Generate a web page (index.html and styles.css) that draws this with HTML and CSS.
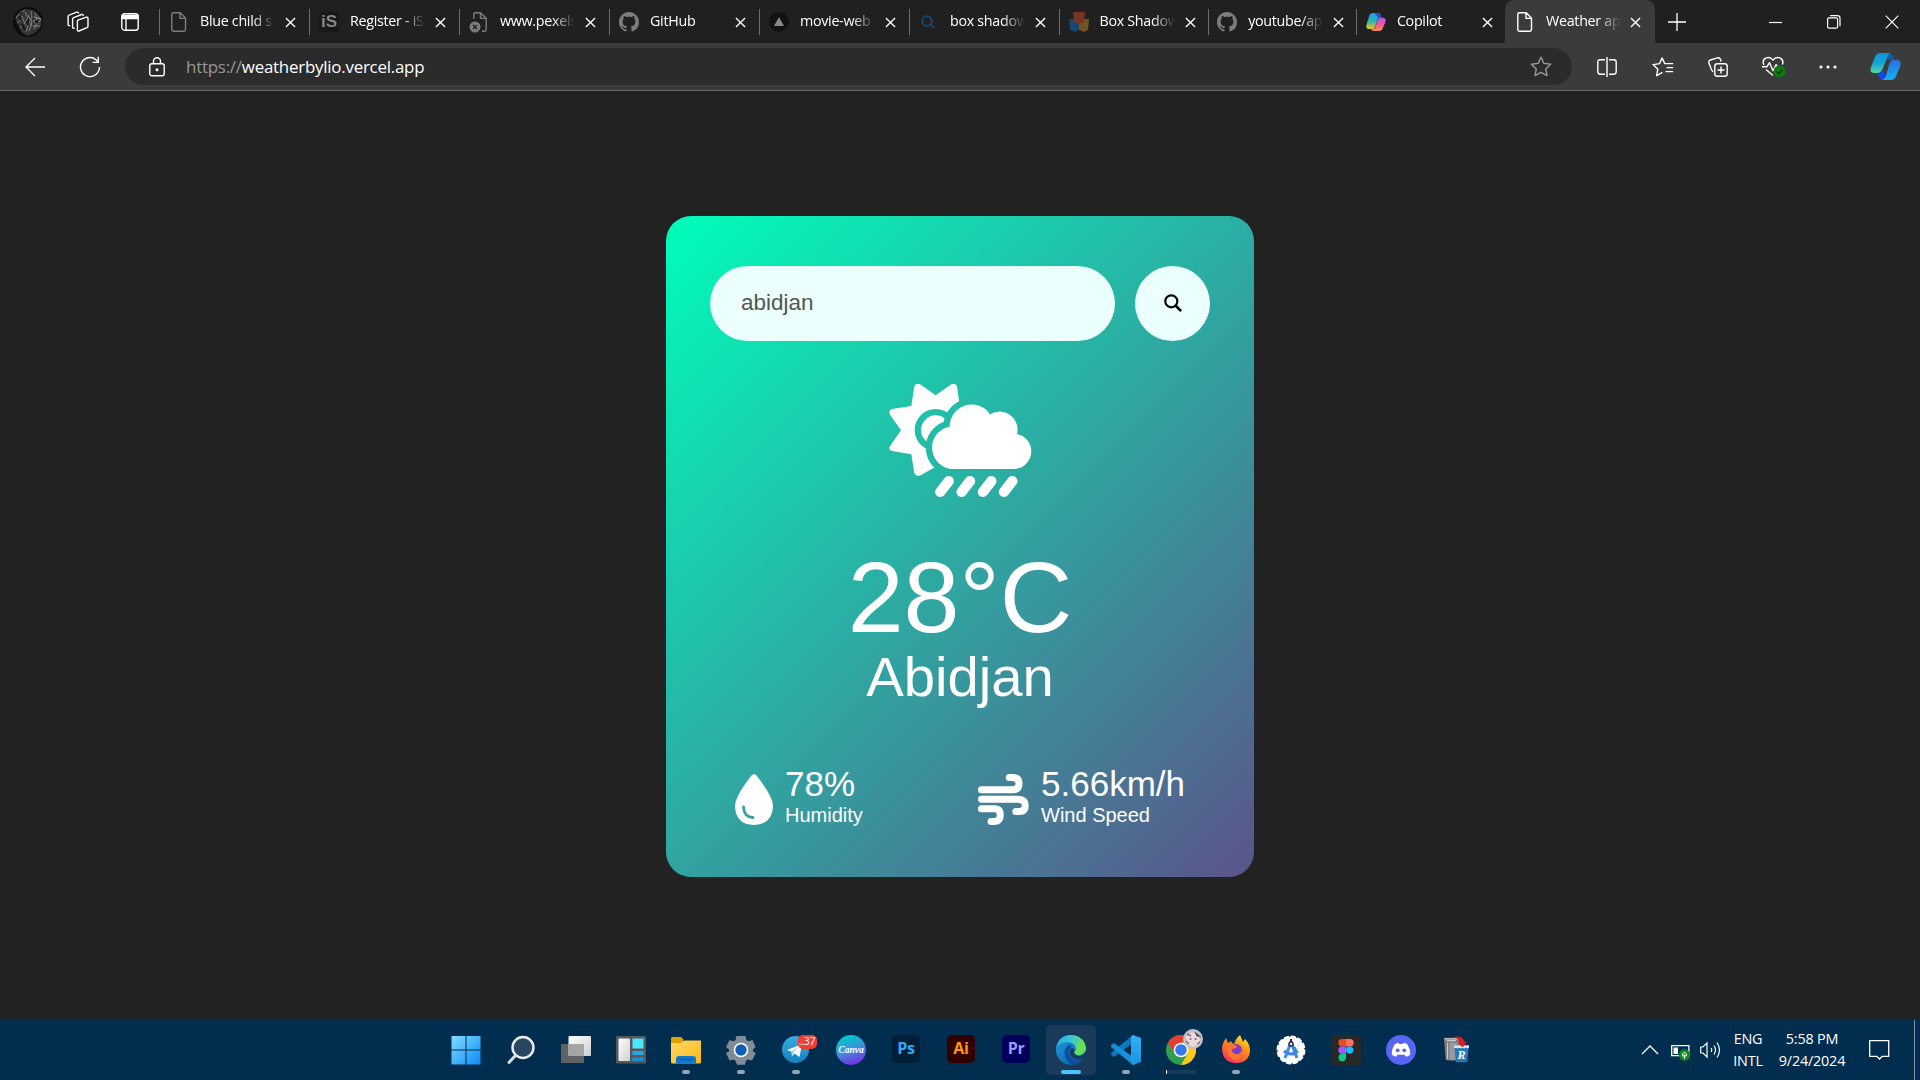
FILE: index.html
```html
<!DOCTYPE html>
<html lang="en">
<head>
<meta charset="utf-8">
<title>Weather app</title>
<link rel="stylesheet" href="styles.css">
</head>
<body>
<svg class="defs" width="0" height="0">
  <defs>
    <linearGradient id="gwin" x1="0" y1="0" x2="1" y2="1"><stop offset="0" stop-color="#82dcff"/><stop offset="1" stop-color="#0a8cf5"/></linearGradient>
    <linearGradient id="gfol" x1="0" y1="0" x2="1" y2="1"><stop offset="0" stop-color="#ffd968"/><stop offset="1" stop-color="#fcb912"/></linearGradient>
    <linearGradient id="gtel" x1="0" y1="0" x2="0" y2="1"><stop offset="0" stop-color="#37aee2"/><stop offset="1" stop-color="#1581c0"/></linearGradient>
    <linearGradient id="gwhite" x1="0" y1="0" x2="1" y2="1"><stop offset="0" stop-color="#fff"/><stop offset="1" stop-color="#cfcfcf"/></linearGradient>
    <linearGradient id="gedge" x1="0" y1="0" x2="1" y2="0"><stop offset="0" stop-color="#2ba9e4"/><stop offset=".5" stop-color="#36c5d8"/><stop offset="1" stop-color="#6be34a"/></linearGradient>
    <linearGradient id="gedge2" x1="0" y1="0" x2="1" y2="1"><stop offset="0" stop-color="#1b9de2"/><stop offset="1" stop-color="#0c59a4"/></linearGradient>
    <linearGradient id="gvs" x1="0" y1="0" x2="0" y2="1"><stop offset="0" stop-color="#33b1f5"/><stop offset="1" stop-color="#1d93e0"/></linearGradient>
    <linearGradient id="gff" x1=".9" y1="0" x2=".3" y2="1"><stop offset="0" stop-color="#fff44f"/><stop offset=".4" stop-color="#ff980e"/><stop offset="1" stop-color="#ff2f5f"/></linearGradient>
    <linearGradient id="gcpa" x1="0" y1="0" x2="0" y2="1"><stop offset="0" stop-color="#1292dc"/><stop offset=".5" stop-color="#12a5d6"/><stop offset="1" stop-color="#56d69a"/></linearGradient>
    <linearGradient id="gcpb" x1="0" y1="0" x2="0" y2="1"><stop offset="0" stop-color="#2a70e0"/><stop offset="1" stop-color="#12b2f2"/></linearGradient>
    <linearGradient id="gcpc" x1="0" y1="0" x2="0" y2="1"><stop offset="0" stop-color="#2199f0"/><stop offset=".5" stop-color="#2cb5a8"/><stop offset="1" stop-color="#f0c81e"/></linearGradient>
    <linearGradient id="gcpd" x1="0" y1="0" x2="0" y2="1"><stop offset="0" stop-color="#a95cf0"/><stop offset=".5" stop-color="#f0559c"/><stop offset="1" stop-color="#ff8a4c"/></linearGradient>
    <symbol id="page" viewBox="0 0 20 22"><path d="M4.500 1.800h6.800l5.200 5.400v11.300q0 1.700-1.700 1.700H4.500q-1.700 0-1.700-1.700V3.500q0-1.700 1.700-1.700zM11 2v5.400h5.400" fill="none" stroke="currentColor" stroke-width="1.400" stroke-linejoin="round"/></symbol>
    <symbol id="x" viewBox="0 0 12 12"><path d="M1 1l10 10M11 1L1 11" fill="none" stroke="currentColor" stroke-width="1.500"/></symbol>
    <symbol id="gh" viewBox="0 0 16 16"><path fill="currentColor" d="M8 0C3.58 0 0 3.58 0 8c0 3.54 2.29 6.53 5.47 7.59.4.07.55-.17.55-.38 0-.19-.01-.82-.01-1.49-2.01.37-2.53-.49-2.69-.94-.09-.23-.48-.94-.82-1.13-.28-.15-.68-.52-.01-.53.63-.01 1.08.58 1.23.82.72 1.21 1.87.87 2.33.66.07-.52.28-.87.51-1.07-1.78-.2-3.64-.89-3.64-3.95 0-.87.31-1.59.82-2.15-.08-.2-.36-1.02.08-2.12 0 0 .67-.21 2.2.82.64-.18 1.32-.27 2-.27s1.36.09 2 .27c1.53-1.04 2.2-.82 2.2-.82.44 1.1.16 1.92.08 2.12.51.56.82 1.27.82 2.15 0 3.07-1.87 3.75-3.65 3.95.29.25.54.73.54 1.48 0 1.07-.01 1.93-.01 2.2 0 .21.15.46.55.38A8.01 8.01 0 0 0 16 8c0-4.42-3.58-8-8-8z"/></symbol>
    <symbol id="cloud" viewBox="0 0 540 420" overflow="visible"><path d="M249 297A64 64 0 0 1 239 170A66 66 0 0 1 360 133A54 54 0 0 1 441 192A53 53 0 0 1 432 297Z"/></symbol>
  </defs>
</svg>
<div class="screen">
  <header class="tabbar">
    <div class="tools">
      <svg class="avatar" width="30" height="30" viewBox="0 0 30 30"><circle cx="15" cy="15" r="15" fill="#0c0c0c"/><path d="M2 12Q5 3 13 2q9 0 13 6l3 5-1 7-6 6-7 3-6-3z" fill="#353535"/><path d="M12 5l3 6-4 5 4 3-2 6M18 4l1 7-3 4 3 4M22 6l2 6-4 2 4 3-3 5M9 9l2 6M25 10l3 2-3 5M3 11l3-4M4 16l4-3M7 21l3-3M9 5l3-2" stroke="#7c7c7c" stroke-width="1" fill="none"/><path d="M15 8l4 7-3 9M21 10l6 2M20 19l7 0" stroke="#aaa" stroke-width=".7" fill="none"/><path d="M9 17l3 6M16 12l-2 6M22 14l3 2M6 9l2 4" stroke="#111" stroke-width="1.600"/></svg>
      <svg width="22" height="22" viewBox="0 0 22 22" fill="none" stroke="#fff" stroke-width="1.400" stroke-linejoin="round" stroke-linecap="round"><path d="M11 9.200l8.400-3q1.600-.3 1.600 1.200v7.800q0 1-1 1.500l-8 3.300q-1.600.5-1.600-1.100v-8.200q0-1.200.6-1.500z"/><path d="M7.200 17.300q-1.600.3-1.600-1.200V8.200q0-1.200 1-1.500l8-3.200q1.400-.4 1.800.9"/><path d="M2.700 14.600q-1.600.3-1.600-1.200V5.700q0-1.200 1-1.500l7.600-3q1.300-.4 1.800.8"/></svg>
      <svg width="18" height="18" viewBox="0 0 18 18" fill="none" stroke="#fff" stroke-width="1.400"><rect x=".8" y=".8" width="16.400" height="16.400" rx="2.800"/><path d="M1 2.500h16v3H1z" fill="#fff"/><path d="M5 5v12"/></svg>
    </div>
    <div class="tab"><svg class="fav dim" width="20" height="22"><use href="#page"/></svg><span class="title">Blue child s</span><svg class="close"><use href="#x"/></svg></div>
    <div class="tab"><div class="fav is">iS</div><span class="title">Register - iS</span><svg class="close"><use href="#x"/></svg></div>
    <div class="tab"><svg class="fav dim" width="20" height="22" viewBox="0 0 20 22"><path d="M4.800 8V3.500q0-1.700 1.700-1.700h5l5.700 5.400v11.300q0 1.700-1.700 1.700H13M11.500 2v5.400H17" fill="none" stroke="currentColor" stroke-width="1.400"/><circle cx="6" cy="16" r="5.500" fill="currentColor"/><path d="M4 14l4 4M8 14l-4 4" stroke="#222" stroke-width="1.400"/></svg><span class="title">www.pexels</span><svg class="close"><use href="#x"/></svg></div>
    <div class="tab"><svg class="fav dim" width="20" height="20"><use href="#gh"/></svg><span class="title">GitHub</span><svg class="close"><use href="#x"/></svg></div>
    <div class="tab"><svg class="fav" width="20" height="20" viewBox="0 0 20 20"><circle cx="10" cy="10" r="10" fill="#111"/><path d="M10 5l5 9H5z" fill="#888"/></svg><span class="title">movie-web</span><svg class="close"><use href="#x"/></svg></div>
    <div class="tab"><svg class="fav" width="20" height="20" viewBox="0 0 20 20" fill="none" stroke="#174a75" stroke-width="1.800"><circle cx="8" cy="9" r="4.800"/><path d="M11.500 12.500l3.500 3.700"/></svg><span class="title">box shadow</span><svg class="close"><use href="#x"/></svg></div>
    <div class="tab narrow"><svg class="fav" width="20" height="20" viewBox="0 0 20 20"><path d="M0 7h10v11l-4 2-5-2z" fill="#17466e"/><path d="M10 7h10l-1 11-4 2-5-2z" fill="#735420"/><path d="M4 0h12l-1 10-5 2-5-2z" fill="#783422"/></svg><span class="title">Box Shadow</span><svg class="close"><use href="#x"/></svg></div>
    <div class="tab narrow"><svg class="fav dim" width="20" height="20"><use href="#gh"/></svg><span class="title">youtube/ap</span><svg class="close"><use href="#x"/></svg></div>
    <div class="tab narrow"><svg class="fav" width="20" height="18" viewBox="0 0 31 27" preserveAspectRatio="none"><path d="M11 0h8q3 0 4 4l1 3h-5l-5 14q-1 3-4 3H5q-6 0-4-7L5 4q1-4 6-4z" fill="url(#gcpc)"/><path d="M20 27h-8q-3 0-4-3l6-1 4-12q1-4 4-4h4q6 0 4 7l-4 9q-1 4-6 4z" fill="url(#gcpd)"/><path d="M13 0h6q3 0 4 4l1 3h-5z" fill="#2454c8"/></svg><span class="title">Copilot</span><svg class="close"><use href="#x"/></svg></div>
    <div class="tab active"><svg class="fav" width="20" height="22"><use href="#page"/></svg><span class="title">Weather ap</span><svg class="close"><use href="#x"/></svg></div>
    <svg class="plus" width="18" height="18" viewBox="0 0 18 18"><path d="M9 0v18M0 9h18" stroke="#fff" stroke-width="1.300"/></svg>
    <div class="winctl">
      <svg width="14" height="14" viewBox="0 0 14 14"><path d="M0 7.500h13" stroke="#fff" stroke-width="1.200"/></svg>
      <svg width="14" height="14" viewBox="0 0 14 14" fill="none" stroke="#fff" stroke-width="1.200"><rect x=".6" y="2.800" width="10" height="10.400" rx="1.500"/><path d="M3 .7h7.500q2.500 0 2.500 2.500v8"/></svg>
      <svg width="14" height="14" viewBox="0 0 14 14"><path d="M.7.700l12.600 12.600M13.300.700L.7 13.300" stroke="#fff" stroke-width="1.200"/></svg>
    </div>
  </header>
  <div class="toolbar">
    <div class="nav">
      <svg width="20" height="20" viewBox="0 0 20 20" fill="none" stroke="#fff" stroke-width="1.400"><path d="M20 10H1M10 1L1 10l9 9"/></svg>
      <svg width="22" height="22" viewBox="0 0 22 22" fill="none" stroke="#fff" stroke-width="1.400"><path d="M20.500 11a9.500 9.500 0 1 1-3.500-7.300l2 2M19.300.8v5.600h-5.600"/></svg>
    </div>
    <div class="address">
      <svg class="lock" width="16" height="20" viewBox="0 0 16 20" fill="none" stroke="#fff" stroke-width="1.400"><rect x=".8" y="6.800" width="14.400" height="12" rx="2"/><path d="M4.500 6.500V4.200a3.500 3.500 0 0 1 7 0v2.300"/><circle cx="8" cy="12.800" r=".8" fill="#fff"/></svg>
      <span class="url"><span class="scheme">https://</span>weatherbylio.vercel.app</span>
      <svg class="star" width="22" height="21" viewBox="0 0 22 21"><path d="M11 1.300l2.900 6.100 6.800.9-5 4.600 1.300 6.700-6-3.300-6 3.300 1.300-6.700-5-4.600 6.800-.9z" fill="none" stroke="#999" stroke-width="1.400" stroke-linejoin="round"/></svg>
    </div>
    <div class="actions">
      <div class="act"><svg width="20" height="20" viewBox="0 0 20 20" fill="none" stroke="#fff" stroke-width="1.400"><path d="M8 2.700H3.200Q.8 2.700.8 5v9.800q0 2.400 2.400 2.400H8M12 2.700h4.800q2.400 0 2.400 2.300v9.800q0 2.400-2.400 2.400H12M10 0v20"/></svg></div>
      <div class="act"><svg class="favs" width="22" height="20" viewBox="0 0 22 20" fill="none" stroke="#fff" stroke-width="1.400" stroke-linejoin="round"><path d="M10.500 15.300l-5.800 3.400 1.100-6.500L1.100 7.600l6.500-1L10 .9l2.800 5.700h8.400M14.500 10.600h6.700M13.500 14.600h7.700"/></svg></div>
      <div class="act"><svg width="20" height="20" viewBox="0 0 20 20" fill="none" stroke="#fff" stroke-width="1.400"><rect x="6.800" y="6.800" width="12.400" height="12.400" rx="2.500"/><path d="M13 9.500v7M9.500 13h7M5 15l-1.800-3L.9 6Q.3 3.800 2.300 3L9.500.8q2-.5 2.900 1.400l.8 2.300"/></svg></div>
      <div class="act"><svg class="health" width="24" height="22" viewBox="0 0 24 22" fill="none" stroke="#fff" stroke-width="1.400" stroke-linejoin="round"><path d="M1.800 9Q-.2 3.500 4.200 1.800 8.500.5 11 4.200 13.500.5 17.800 1.800 22 3.500 20.500 8.500M0 10.700h5l2.500-4 3.500 8 3-6 2 2.500h3M4 13.500l7 6"/><circle cx="17.500" cy="15.500" r="6" fill="#0f7b14" stroke="none"/><path d="M14.500 15.500l2.200 2.200 4-4" stroke="#063d08"/></svg></div>
      <div class="act"><svg class="dots" width="18" height="4" viewBox="0 0 18 4" fill="#fff"><circle cx="2" cy="2" r="1.600"/><circle cx="9" cy="2" r="1.600"/><circle cx="16" cy="2" r="1.600"/></svg></div>
      <div class="act"><svg class="copilot" width="31" height="27" viewBox="0 0 31 27"><path d="M11 0h8q3 0 4 4l1 3-8-1z" fill="#0b5fae"/><path d="M7 18l8 0q-1 9 3 9h-4q-6 0-7-9z" fill="#1b45d8"/><path d="M11 0h9q-2 1-3 5l-4 10q-2 5-6 5H4q-5 0-3-6L5 4q1-4 6-4z" fill="url(#gcpa)"/><path d="M20 27h-8q3-1 4-4l3-11q1-5 5-5h3q5 0 3 7l-4 9q-1 4-6 4z" fill="url(#gcpb)"/></svg></div>
    </div>
  </div>

  <main class="viewport">
    <section class="card">
      <div class="search">
        <div class="field">abidjan</div>
        <button class="go"><svg width="20" height="20" viewBox="0 0 20 20" fill="none" stroke="#000"><circle cx="8.300" cy="8.300" r="6" stroke-width="2.200"/><path d="M12.500 12.500l5.600 5.600" stroke-width="2.600"/></svg></button>
      </div>
      <svg class="weather-icon" width="180" height="140" viewBox="0 0 540 420">
        <mask id="cut" maskUnits="userSpaceOnUse" x="0" y="0" width="540" height="420">
          <rect width="540" height="420" fill="#fff"/>
          <circle cx="197" cy="180" r="53.500" fill="none" stroke="#000" stroke-width="19"/>
          <use href="#cloud" width="540" height="420" stroke="#000" stroke-width="38"/>
        </mask>
        <path mask="url(#cut)" fill="#fff" d="M133 49Q137 38 150 43L197 76 244 43Q257 38 261 49L268 100 300 180 250 260 152 316Q138 322 133 310L124 253 66 243Q54 239 60 228L93 181 60 134Q54 122 66 117L124 108Z"/>
        <use href="#cloud" width="540" height="420" fill="#fff"/>
        <path stroke="#fff" stroke-width="31" stroke-linecap="round" d="M211 365.500l25-32M275 365.500l25-32M339 365.500l25-32M402 365.500l25-32"/>
      </svg>
      <h1 class="temp">28°C</h1>
      <h2 class="city">Abidjan</h2>
      <div class="details">
        <div class="col">
          <svg width="38" height="51" viewBox="0 0 38 51"><path d="M16.500 1.500Q19-1.200 21.500 1.500 38 22.500 38 32 37.500 50.500 19 51 .500 50.500 0 32 0 22.500 16.500 1.500z" fill="#fff"/><path d="M8.500 33q.5 10 9.500 10.500" fill="none" stroke="#31a09f" stroke-width="2.800" stroke-linecap="round"/></svg>
          <div><p class="value">78%</p><p class="label">Humidity</p></div>
        </div>
        <div class="col">
          <svg width="51" height="51" viewBox="0 0 51 51" fill="none" stroke="#fff" stroke-width="7" stroke-linecap="round"><path d="M3.500 15.700H35Q41 15.500 41 9.500 41 3.500 34.500 3.500H31.300M3.500 25.300H40Q47.300 25.500 47.300 31.500 47.300 37.500 41 37.500H37.800M3.500 34.800H17Q22.300 35 22.300 41 22.300 47.400 16.500 47.500H13"/></svg>
          <div><p class="value">5.66km/h</p><p class="label">Wind Speed</p></div>
        </div>
      </div>
    </section>
  </main>

  <footer class="taskbar">
    <div class="apps">
      <div class="app"><svg viewBox="0 0 30 30"><path d="M.5 1h14v13.500H.5zM15.500 1h14v13.500h-14zM.5 15.500h14v14H.5zM15.500 15.500h14v14h-14z" fill="url(#gwin)"/></svg></div>
      <div class="app"><svg viewBox="0 0 30 30"><circle cx="17" cy="12.500" r="10.500" fill="#284762" stroke="#ececec" stroke-width="2.400"/><path d="M9.500 20.500L3 27.500" stroke="#ddd" stroke-width="3" stroke-linecap="round"/></svg></div>
      <div class="app"><svg viewBox="0 0 30 30"><rect y="9" width="23" height="19" rx="1" fill="#5f6265"/><rect x="7.500" y="1" width="22.500" height="20" rx="1" fill="url(#gwhite)"/><path d="M7.500 9H23v12H7.500z" fill="#a5a5a5"/></svg></div>
      <div class="app"><svg viewBox="0 0 30 30"><rect y="1" width="30" height="27.500" rx="1" fill="#55595c"/><rect x="2.500" y="3.500" width="11.500" height="22.500" rx="1" fill="url(#gwhite)"/><path d="M16.500 3.500h11v10h-11z" fill="#4be5ff"/><path d="M16.500 16h11v4h-11z" fill="#25aae8"/><path d="M16.500 22.500h11V26h-11z" fill="#1590dc"/></svg></div>
      <div class="app running"><svg viewBox="0 0 30 30"><path d="M0 3.500Q0 2 1.500 2H10l3 3h-1v6H0z" fill="#e0a000"/><path d="M0 8h10l3-2.500h17V27q0 1.500-1.500 1.500h-27Q0 28.500 0 27z" fill="url(#gfol)"/><path d="M5 28.500V24q0-3 3-3h14q3 0 3 3v4.500z" fill="#1178cc"/><path d="M8.500 24.500h13" stroke="#0b4f9c"/></svg></div>
      <div class="app running"><svg viewBox="0 0 30 30"><path d="M10.500 1h9l1 4 2 1.200 4-1.200 3 7-2.500 2.500v2L30 18l-4 7.500-4-1-2 1.200-1 4h-8l-1.500-4-2-1.200-4 1L0 18l3-1.500v-2L0 12l3.500-7 4 1.200 2-1.200z" fill="#808b95"/><circle cx="15" cy="15" r="6.500" fill="#0f5fb8" stroke="#fff" stroke-width="1.600"/></svg></div>
      <div class="app running"><svg viewBox="0 0 30 30"><circle cx="14.500" cy="14.500" r="13.500" fill="url(#gtel)"/><path d="M6 15l15-6-2.500 13-5-3.500-2.500 2.500-.5-4.500z" fill="#fff"/><path d="M10.500 16.500l7-5-5 6-1.500 3.500z" fill="#a9cde6"/></svg><span class="badge">..37</span></div>
      <div class="app"><div class="tile canva">Canva</div></div>
      <div class="app"><div class="tile adobe ps">Ps</div></div>
      <div class="app"><div class="tile adobe ai">Ai</div></div>
      <div class="app"><div class="tile adobe pr">Pr</div></div>
      <div class="app current"><svg viewBox="0 0 30 30"><circle cx="15" cy="15" r="15" fill="url(#gedge2)"/><path d="M0 14Q3 7 12 7q8 1 8 8-3 2-1 4 5 4 10-3 1-5-1.500-9Q24 0 15 0 2 0 0 14z" fill="url(#gedge)"/><path d="M13 10q-5 3-4.500 9 1 8 8 11 7 0 11-6.500-7 3-12-1-5-4-1-9 2-4-1.500-3.500z" fill="#0d4f9b"/><path d="M15 14q-3 4 1 8 5 4 11 1.500l3-2v-5q-6 7-11 3-2-1-.5-4.500-1.500-3-3.500-1z" fill="#123b5d"/><path d="M20 12q1 3-1 5 0 3 5 3 5-1 6-6 0-5-4-10z" fill="#64df58"/></svg></div>
      <div class="app running"><svg viewBox="0 0 30 30"><path d="M22 0v8L3 22 0 19.500V18z" fill="#0e78bc"/><path d="M22 30v-8L3 8 0 10.500V12z" fill="#168fd8"/><path d="M22 0l8 3v24l-8 3-2-2V2z" fill="url(#gvs)"/></svg></div>
      <div class="app chrome"><svg viewBox="0 0 30 30"><circle cx="15" cy="15" r="15" fill="#2f9e4f"/><path d="M15 0A15 15 0 0 1 28 7.500H15L8.500 18.800 2 7.500A15 15 0 0 1 15 0z" fill="#e23d30"/><path d="M28 7.500A15 15 0 0 1 15 30l6.500-11.200L15 7.500z" fill="#fcc81f"/><circle cx="15" cy="15" r="7.300" fill="#fff"/><circle cx="15" cy="15" r="5.800" fill="#3279ed"/></svg><svg class="face" viewBox="0 0 20 20"><circle cx="10" cy="10" r="10" fill="#c4c0c6"/><path d="M3 8q7-9 14 0l-2 8-5 2-5-2z" fill="#eadbdd"/><path d="M4 5l4 2M12 3l2 4 4 1M3 12l3 3M14 15l3-2" stroke="#77717b" stroke-width="1.400"/><circle cx="7.500" cy="10" r="1" fill="#96555f"/><circle cx="12.500" cy="10" r="1" fill="#96555f"/></svg></div>
      <div class="app running"><svg viewBox="0 0 30 30"><path d="M1 12q1-5 4-9l2 5 3-2q0 2 3 3 2-6 6-9l3 7 2-3q5 5 5 12-1 12-14 12Q1 28 1 12z" fill="url(#gff)"/><circle cx="15" cy="15" r="6" fill="#7b3dd0"/><path d="M5 9q5-2 8 1l3 1q-1 3-5 3-1 3 3 5 6 1 8-5 1 10-8 11-9-2-9-16z" fill="#ff752e"/></svg></div>
      <div class="app"><svg viewBox="0 0 30 30"><circle cx="15" cy="15" r="13.500" fill="#fff" stroke="#fff" stroke-width="2" stroke-dasharray="5 2"/><path d="M18 12a4 4 0 0 1 0 7z" fill="#2a9e55" stroke="#2a9e55" stroke-width="2"/><path d="M15 7L9 23M15 7l6 16M8 16q7 6 14 0" fill="none" stroke="#4285e8" stroke-width="3"/><circle cx="15" cy="9" r="2" fill="#fff" stroke="#213040" stroke-width="1.500"/><path d="M15 4v3" stroke="#213040" stroke-width="2"/></svg></div>
      <div class="app"><svg viewBox="0 0 30 30"><rect width="30" height="30" fill="#282828"/><path d="M15 4h-4a3.700 3.700 0 0 0 0 7.400h4z" fill="#e34e26"/><path d="M15 4h4a3.700 3.700 0 0 1 0 7.400h-4z" fill="#ff7262"/><path d="M15 11.400h-4a3.700 3.700 0 0 0 0 7.400h4z" fill="#a259ff"/><circle cx="18.700" cy="15.100" r="3.700" fill="#1abcfe"/><path d="M15 18.800h-4a3.700 3.700 0 1 0 4 3.700z" fill="#0acf83"/></svg></div>
      <div class="app"><svg viewBox="0 0 30 30"><circle cx="15" cy="15" r="15" fill="#5865f2"/><path d="M8.500 9.500q2-1.500 4-1.700l.7 1.200h3.600l.7-1.200q2 .2 4 1.700 3 5 2.800 10-2 1.700-4.300 2.200l-1.300-2h-7.400l-1.300 2q-2.300-.5-4.300-2.200-.2-5 2.800-10z" fill="#fff"/><circle cx="11.700" cy="15.300" r="1.900" fill="#5865f2"/><circle cx="18.300" cy="15.300" r="1.900" fill="#5865f2"/></svg></div>
      <div class="app"><svg class="uninstaller" viewBox="0 0 30 30"><path d="M3 2h15l2 4v20H5z" fill="#777"/><path d="M4 3h14M6 5h10M7 7v18" stroke="#ccc" stroke-width="1.300"/><path d="M9 7h9v19H9z" fill="#999"/><path d="M14 10h16l-2 18H16z" fill="#2878b8"/><path d="M14 10h16v3H14z" fill="#cfe2ee"/><path d="M13 1q10-2 12 5h3l-5 6-5-5h3q-2-4-8-6z" fill="#e9171b"/><text x="22" y="25" text-anchor="middle" font-family="Liberation Serif, serif" font-weight="bold" font-style="italic" font-size="13" fill="#fff">R</text></svg></div>
    </div>
    <div class="tray">
      <svg width="18" height="10" viewBox="0 0 18 10"><path d="M1 9l8-8 8 8" fill="none" stroke="#fff" stroke-width="1.400"/></svg>
      <svg class="battery" width="21" height="16" viewBox="0 0 21 16"><path d="M.7.700h17.200v10H.7z" fill="none" stroke="#fff" stroke-width="1.300"/><path d="M2.500 2.500H7v6.500H2.500z" fill="#fff"/><circle cx="13.500" cy="10" r="5.800" fill="#0f8a1c"/><path d="M13.500 14V9.500M11.500 11q0-3 2-4 2 1 2 4z" fill="none" stroke="#fff"/></svg>
      <svg class="speaker" width="21" height="18" viewBox="0 0 21 18" fill="none" stroke="#fff" stroke-width="1.200"><path d="M.7 6H3l4-4v14l-4-4H.7zM11 7q1.500 2 0 4M14 4.500q3 4.500 0 9M17 1.500q5 7.500 0 15"/></svg>
      <div class="lines lang"><span>ENG</span><span>INTL</span></div>
      <div class="lines clock"><span>5:58 PM</span><span>9/24/2024</span></div>
      <svg class="note" width="21" height="20" viewBox="0 0 21 20"><path d="M.7.700h19v15.600h-6.500l-2.700 2.700-2.700-2.700H.7z" fill="none" stroke="#fff" stroke-width="1.300"/></svg>
    </div>
  </footer>
</div>
</body>
</html>
```
FILE: styles.css
```css
* { box-sizing: border-box; margin: 0; padding: 0; }
body { background: #222; font-family: "Open Sans", "Noto Sans", sans-serif; color: #fff; overflow: hidden; }
svg { display: block; flex: none; }
.defs { position: absolute; }
.screen { width: 1920px; height: 1080px; display: flex; flex-direction: column; }

.tabbar { height: 43px; display: flex; align-items: center; background: #202020; flex: none; }
.tools { width: 159px; display: flex; align-items: center; padding-left: 13px; flex: none; }
.avatar { margin-right: 24px; }
.tools svg:last-child { margin-left: 32px; }
.tab { width: 150px; height: 43px; display: flex; align-items: center; padding-left: 10px; flex: none;
  background: linear-gradient(#6b6b6b, #6b6b6b) 0 9px / 1px 26px no-repeat; }
.tab.narrow { width: 148.700px; padding-left: 9.500px; }
.fav { width: 20px; flex: none; color: #ddd; }
.dim { color: #7d7d7d; }
.is { height: 20px; background: #181818; color: #858585; font: bold 17px/20px "Liberation Sans", sans-serif; text-align: center; }
.title { width: 75px; margin: -1px 0 0 11px; font-size: 14.300px; letter-spacing: -.3px; line-height: 20px; white-space: nowrap; overflow: hidden;
  -webkit-mask: linear-gradient(90deg, #000 70%, transparent); mask: linear-gradient(90deg, #000 70%, transparent); }
.close { width: 11px; height: 11px; margin: 1px 0 0 10px; }
.tab.active { background: #3b3b3b; border-radius: 9px 9px 0 0; }
.tab.active .fav { color: #fff; }
.tab.active .close { margin-left: 9px; }
.plus { margin-left: 13px; }
.winctl { display: flex; gap: 44px; margin-left: auto; padding-right: 21px; }

.toolbar { height: 48px; display: flex; align-items: center; background: #3b3b3b; flex: none; box-shadow: inset 0 -1px #68666a; padding-bottom: 1px; }
.nav { width: 125px; display: flex; align-items: center; gap: 34px; padding-left: 25px; flex: none; }
.address { width: 1447px; height: 37px; border-radius: 19px; background: #2b2b2b; display: flex; align-items: center; padding: 0 20px 0 24px; flex: none; }
.url { margin-left: 21px; font-size: 16.900px; letter-spacing: -.23px; line-height: 22px; }
.scheme { color: #969696; }
.star { margin-left: auto; }
.actions { display: flex; margin-left: 7px; }
.act { width: 55.500px; display: flex; justify-content: center; align-items: center; }
.favs, .health { margin-left: 2px; }
.dots { margin-right: 2px; }
.copilot { margin-left: 2px; }

.viewport { flex: 1; padding-top: 125px; font-family: "Liberation Sans", Arial, sans-serif; }
.card { width: 588px; height: 661px; margin: 0 auto; padding: 50px 44px 0; border-radius: 25px; display: flex; flex-direction: column; align-items: center;
  background: linear-gradient(135deg, #00feba, #5b548a); }
.search { width: 100%; display: flex; gap: 20px; }
.field { flex: 1; height: 75px; border-radius: 37.500px; background: #ebfffc; color: #555; font-size: 22.500px; line-height: 74px; padding-left: 31px; }
.go { width: 75px; height: 75px; border: 0; border-radius: 50%; background: #ebfffc; display: flex; align-items: center; justify-content: center; padding-bottom: 2px; }
.weather-icon { margin-top: 29px; }
.temp { margin-top: 40px; font-size: 100.500px; font-weight: 500; line-height: 95px; }
.city { margin-top: 2px; font-size: 56.250px; font-weight: 400; line-height: 59px; }
.details { width: 100%; display: flex; justify-content: space-between; padding: 0 25px 0 24.500px; margin-top: 58px; }
.col { display: flex; align-items: center; gap: 12.500px; }
.value { font-size: 35px; line-height: 40px; }
.label { font-size: 20px; line-height: 23px; }
.col > svg { margin-top: 7px; }

.taskbar { height: 60px; flex: none; display: flex; background: #012d4f; }
.apps { display: flex; margin-left: 438.500px; }
.app { position: relative; width: 55px; height: 60px; display: flex; align-items: center; justify-content: center; }
.app > svg { width: 30px; height: 30px; }
.app > .uninstaller { width: 28px; height: 28px; margin-right: 2px; }
.app.running::after { content: ""; position: absolute; bottom: 6px; width: 8px; height: 4px; border-radius: 2px; background: #93a4b3; }
.app.current::before { content: ""; position: absolute; width: 50px; height: 50px; border-radius: 5px; background: #1a3a59; }
.app.current > svg { position: relative; }
.app.current::after { content: ""; position: absolute; bottom: 6px; width: 20px; height: 4px; border-radius: 2px; background: #4cc2ff; }
.app.chrome::after { content: ""; position: absolute; bottom: 6px; width: 30px; height: 4px; background: linear-gradient(90deg, #fff 1px, #173b59 1px); }
.app > .face { position: absolute; width: 20px; height: 20px; left: 29px; top: 9px; }
.badge { position: absolute; left: 29px; top: 15px; width: 19px; height: 14px; border-radius: 5px; background: #f23c34; font-size: 10.500px; line-height: 13px; letter-spacing: -.3px; text-align: center; }
.tile { width: 28px; height: 28px; display: flex; align-items: center; justify-content: center; border-radius: 5px; margin-top: -2px; }
.canva { width: 30px; height: 30px; margin: 0; border-radius: 50%; background: linear-gradient(160deg, #05c5cb 15%, #3d8edb 50%, #7d2ae8 90%); font: italic bold 9.500px "Liberation Serif", serif; }
.adobe { font-size: 16px; font-weight: 700; padding-bottom: 3px; letter-spacing: -.3px; }
.ps { background: #001e36; color: #31a8ff; }
.ai { background: #330000; color: #ff9a00; }
.pr { background: #00005b; color: #9999ff; }

.tray { flex: 1; display: flex; align-items: center; justify-content: flex-end; padding-right: 24px; margin-right: 5px; border-right: 1px solid #7f95a7; }
.battery { margin-left: 12px; margin-top: 5px; }
.speaker { margin-left: 8px; }
.lines { display: flex; flex-direction: column; align-items: center; font-size: 14.400px; line-height: 22px; letter-spacing: -.2px; white-space: nowrap; }
.lang { width: 36px; margin-left: 9px; }
.clock { width: 72px; margin-left: 10px; }
.note { margin-left: 21px; margin-top: -1px; }
```
